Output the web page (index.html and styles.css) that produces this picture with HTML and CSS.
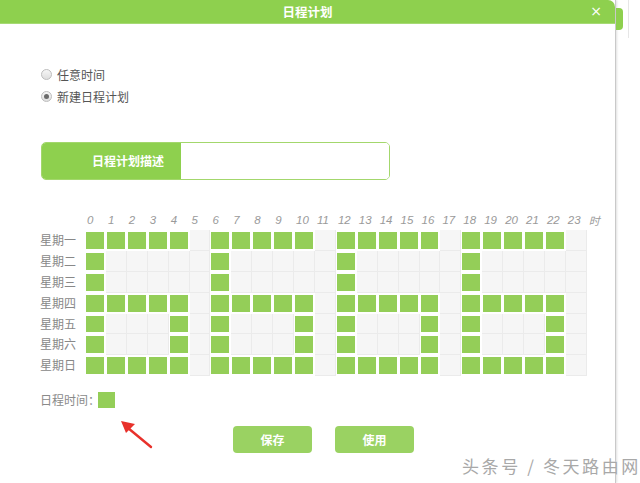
FILE: index.html
```html
<!DOCTYPE html>
<html lang="zh-CN">
<head>
<meta charset="utf-8">
<title>日程计划</title>
<link rel="stylesheet" href="styles.css">
</head>
<body>
<div class="screen">
  <div class="dialog">
    <div class="header">
      <span class="title">日程计划</span>
      <span class="close">×</span>
    </div>
    <div class="body">
      <div class="radios">
        <label class="radio"><span class="dot"></span><span>任意时间</span></label>
        <label class="radio"><span class="dot checked"></span><span>新建日程计划</span></label>
      </div>
      <div class="desc">
        <div class="desc-label">日程计划描述</div>
        <div class="desc-input"></div>
      </div>
      <div class="sched">
        <span></span>
        <span class="h">0</span><span class="h">1</span><span class="h">2</span><span class="h">3</span><span class="h">4</span><span class="h">5</span><span class="h">6</span><span class="h">7</span><span class="h">8</span><span class="h">9</span><span class="h">10</span><span class="h">11</span><span class="h">12</span><span class="h">13</span><span class="h">14</span><span class="h">15</span><span class="h">16</span><span class="h">17</span><span class="h">18</span><span class="h">19</span><span class="h">20</span><span class="h">21</span><span class="h">22</span><span class="h">23</span><span class="h unit">时</span>

        <span class="day">星期一</span>
        <i class="c on"></i><i class="c on"></i><i class="c on"></i><i class="c on"></i><i class="c on"></i><i class="c"></i><i class="c on"></i><i class="c on"></i><i class="c on"></i><i class="c on"></i><i class="c on"></i><i class="c"></i><i class="c on"></i><i class="c on"></i><i class="c on"></i><i class="c on"></i><i class="c on"></i><i class="c"></i><i class="c on"></i><i class="c on"></i><i class="c on"></i><i class="c on"></i><i class="c on"></i><i class="c"></i><span></span>

        <span class="day">星期二</span>
        <i class="c on"></i><i class="c"></i><i class="c"></i><i class="c"></i><i class="c"></i><i class="c"></i><i class="c on"></i><i class="c"></i><i class="c"></i><i class="c"></i><i class="c"></i><i class="c"></i><i class="c on"></i><i class="c"></i><i class="c"></i><i class="c"></i><i class="c"></i><i class="c"></i><i class="c on"></i><i class="c"></i><i class="c"></i><i class="c"></i><i class="c"></i><i class="c"></i><span></span>

        <span class="day">星期三</span>
        <i class="c on"></i><i class="c"></i><i class="c"></i><i class="c"></i><i class="c"></i><i class="c"></i><i class="c on"></i><i class="c"></i><i class="c"></i><i class="c"></i><i class="c"></i><i class="c"></i><i class="c on"></i><i class="c"></i><i class="c"></i><i class="c"></i><i class="c"></i><i class="c"></i><i class="c on"></i><i class="c"></i><i class="c"></i><i class="c"></i><i class="c"></i><i class="c"></i><span></span>

        <span class="day">星期四</span>
        <i class="c on"></i><i class="c on"></i><i class="c on"></i><i class="c on"></i><i class="c on"></i><i class="c"></i><i class="c on"></i><i class="c on"></i><i class="c on"></i><i class="c on"></i><i class="c on"></i><i class="c"></i><i class="c on"></i><i class="c on"></i><i class="c on"></i><i class="c on"></i><i class="c on"></i><i class="c"></i><i class="c on"></i><i class="c on"></i><i class="c on"></i><i class="c on"></i><i class="c on"></i><i class="c"></i><span></span>

        <span class="day">星期五</span>
        <i class="c on"></i><i class="c"></i><i class="c"></i><i class="c"></i><i class="c on"></i><i class="c"></i><i class="c on"></i><i class="c"></i><i class="c"></i><i class="c"></i><i class="c on"></i><i class="c"></i><i class="c on"></i><i class="c"></i><i class="c"></i><i class="c"></i><i class="c on"></i><i class="c"></i><i class="c on"></i><i class="c"></i><i class="c"></i><i class="c"></i><i class="c on"></i><i class="c"></i><span></span>

        <span class="day">星期六</span>
        <i class="c on"></i><i class="c"></i><i class="c"></i><i class="c"></i><i class="c on"></i><i class="c"></i><i class="c on"></i><i class="c"></i><i class="c"></i><i class="c"></i><i class="c on"></i><i class="c"></i><i class="c on"></i><i class="c"></i><i class="c"></i><i class="c"></i><i class="c on"></i><i class="c"></i><i class="c on"></i><i class="c"></i><i class="c"></i><i class="c"></i><i class="c on"></i><i class="c"></i><span></span>

        <span class="day">星期日</span>
        <i class="c on"></i><i class="c on"></i><i class="c on"></i><i class="c on"></i><i class="c on"></i><i class="c"></i><i class="c on"></i><i class="c on"></i><i class="c on"></i><i class="c on"></i><i class="c on"></i><i class="c"></i><i class="c on"></i><i class="c on"></i><i class="c on"></i><i class="c on"></i><i class="c on"></i><i class="c"></i><i class="c on"></i><i class="c on"></i><i class="c on"></i><i class="c on"></i><i class="c on"></i><i class="c"></i><span></span>
      </div>
      <div class="legend">
        <span>日程时间：</span><span class="swatch"></span>
      </div>
      <div class="actions">
        <button class="btn">保存</button>
        <button class="btn">使用</button>
      </div>
    </div>
    <svg class="arrow" width="40" height="36" viewBox="0 0 40 36">
      <line x1="33" y1="31" x2="10" y2="12" stroke="#e8312b" stroke-width="2.4" stroke-linecap="round"/>
      <polygon points="3,5 17,8 8,17" fill="#e8312b"/>
    </svg>
  </div>
  <div class="backdrop">
    <div class="tab"></div>
    <div class="edge"></div>
  </div>
  <div class="watermark">头条号 / 冬天路由网</div>
</div>
</body>
</html>
```

FILE: styles.css
```css
* { box-sizing: border-box; }
html, body { margin: 0; padding: 0; background: #fff; }
body {
  font-family: "Noto Sans CJK SC", "Liberation Sans", sans-serif;
  font-size: 12px;
  color: #555;
}
.screen {
  position: relative;
  width: 640px;
  height: 483px;
  overflow: hidden;
  display: flex;
}
.dialog {
  position: relative;
  width: 616px;
  height: 483px;
  background: #fff;
  border-right: 1px solid #c9c9c9;
  box-shadow: 1px 0 2px rgba(0,0,0,0.12);
  flex: none;
}
.header {
  height: 24px;
  background: #8ed04e;
  border-radius: 0 7px 0 0;
  display: flex;
  align-items: center;
  justify-content: center;
  position: relative;
  border-bottom: 1px solid #a6da74;
}
.title {
  color: #fff;
  font-weight: bold;
  font-size: 12.5px;
  line-height: 24px;
}
.close {
  position: absolute;
  right: 13px;
  top: 0;
  color: #fff;
  font-size: 14px;
  line-height: 23px;
  font-family: "DejaVu Sans", sans-serif;
}
.body {
  padding: 39px 0 0 40px;
}
.radios { display: flex; flex-direction: column; }
.radio {
  height: 22px;
  display: flex;
  align-items: center;
  gap: 5px;
  color: #555;
  font-size: 12px;
}
.dot {
  width: 11px;
  height: 11px;
  margin-left: 1px;
  border-radius: 50%;
  border: 1px solid #bdbdbd;
  background: linear-gradient(#f6f6f6, #dedede);
  position: relative;
}
.dot.checked::after {
  content: "";
  position: absolute;
  left: 2px; top: 2px;
  width: 5px; height: 5px;
  border-radius: 50%;
  background: #6a6a6a;
}
.desc {
  margin: 35px 0 0 1px;
  width: 349px;
  height: 38px;
  display: flex;
  border: 1px solid #a3d76c;
  border-radius: 5px;
  overflow: hidden;
}
.desc-label {
  width: 139px;
  background: #8ed04e;
  color: #fff;
  font-weight: bold;
  font-size: 12px;
  line-height: 36px;
  padding-left: 50px;
}
.desc-input { flex: 1; background: #fff; }
.sched {
  margin-top: 34px;
  display: grid;
  grid-template-columns: 45px repeat(24, 20.92px) 30px;
  grid-template-rows: 16px repeat(7, 20.9px);
}
.h {
  font-family: "Liberation Sans", sans-serif;
  font-style: italic;
  font-size: 11.5px;
  color: #9a9a9a;
  line-height: 16px;
  padding-left: 2px;
  margin-top: -2px;
}
.h.unit { font-family: "Noto Sans CJK SC", sans-serif; font-size: 11px; }
.day {
  color: #888;
  font-size: 12px;
  line-height: 20.9px;
}
.c {
  display: block;
  background: #f6f6f6;
  box-shadow: inset -1px -1px 0 #ebebeb;
}
.c.on {
  background: #94ce58;
  background-clip: content-box;
  padding: 2px 2px 2px 1px;
  box-shadow: none;
}
.legend {
  margin-top: 15px;
  display: flex;
  align-items: center;
  color: #8a8a8a;
  font-size: 12px;
  height: 17px;
}
.swatch {
  width: 17px;
  height: 16px;
  margin-left: -2px;
  background: #94ce58;
}
.actions {
  margin: 18px 0 0 193px;
  display: flex;
  gap: 23px;
}
.btn {
  width: 79px;
  height: 27px;
  border: none;
  border-radius: 4px;
  background: #9ad262;
  color: #fff;
  font-family: "Noto Sans CJK SC", sans-serif;
  font-weight: bold;
  font-size: 12px;
  padding: 0;
}
.arrow {
  position: absolute;
  left: 118px;
  top: 416px;
}
.backdrop {
  position: relative;
  flex: 1;
}
.tab {
  position: absolute;
  left: 0;
  top: 8px;
  width: 7px;
  height: 22px;
  background: #8ed04e;
  border-radius: 0 4px 4px 0;
}
.edge {
  position: absolute;
  left: 12px;
  top: 0;
  width: 1px;
  height: 38px;
  background: #e6e6e6;
}
.watermark {
  position: absolute;
  left: 462px;
  top: 453px;
  font-size: 17px;
  color: #a8a8a8;
  letter-spacing: 2.6px;
  white-space: nowrap;
  text-shadow: 0 0 1px #fff;
}
```
